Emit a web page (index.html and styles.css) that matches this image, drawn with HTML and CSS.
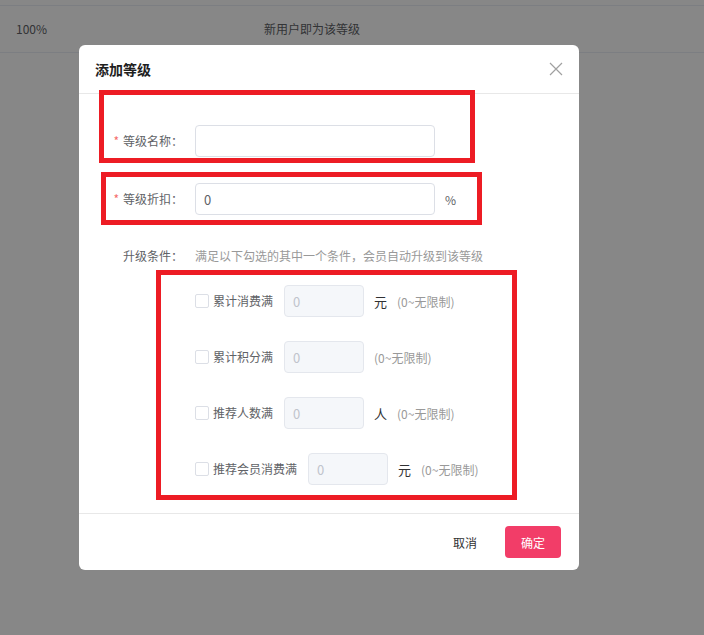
FILE: index.html
```html
<!DOCTYPE html>
<html lang="zh-CN">
<head>
    <meta charset="UTF-8">
    <meta name="viewport" content="width=device-width, initial-scale=1.0">
    <title>会员等级</title>
    <link rel="stylesheet" href="styles.css">
</head>
<body>
    <div class="level-table">
        <div class="table-row">
            <div class="cell">100%</div>
            <div class="cell cell-center">新用户即为该等级</div>
            <div class="cell"></div>
        </div>
    </div>

    <div class="mask"></div>

    <div class="dialog">
        <div class="dialog-header">
            <span class="dialog-title">添加等级</span>
            <button class="dialog-close" type="button" aria-label="关闭">
                <svg width="14" height="14" viewBox="0 0 14 14">
                    <path d="M1 1L13 13M13 1L1 13" stroke="#a0a0a0" stroke-width="1.2" fill="none"/>
                </svg>
            </button>
        </div>

        <form class="dialog-body">
            <div class="form-item">
                <label class="form-label"><span class="required">*</span>等级名称：</label>
                <input class="form-input" type="text">
            </div>
            <div class="form-item form-item-discount">
                <label class="form-label"><span class="required">*</span>等级折扣：</label>
                <input class="form-input" type="text" value="0">
                <span class="unit-percent">%</span>
            </div>
            <div class="form-item form-item-upgrade">
                <label class="form-label">升级条件：</label>
                <span class="form-tip">满足以下勾选的其中一个条件，会员自动升级到该等级</span>
            </div>

            <div class="conditions">
                <div class="condition">
                    <label class="check"><span class="check-box"></span>累计消费满</label>
                    <input class="cond-input" type="text" placeholder="0" disabled>
                    <span class="cond-unit">元</span>
                    <span class="cond-tip">(0~无限制)</span>
                </div>
                <div class="condition">
                    <label class="check"><span class="check-box"></span>累计积分满</label>
                    <input class="cond-input" type="text" placeholder="0" disabled>
                    <span class="cond-tip">(0~无限制)</span>
                </div>
                <div class="condition">
                    <label class="check"><span class="check-box"></span>推荐人数满</label>
                    <input class="cond-input" type="text" placeholder="0" disabled>
                    <span class="cond-unit">人</span>
                    <span class="cond-tip">(0~无限制)</span>
                </div>
                <div class="condition">
                    <label class="check"><span class="check-box"></span>推荐会员消费满</label>
                    <input class="cond-input" type="text" placeholder="0" disabled>
                    <span class="cond-unit">元</span>
                    <span class="cond-tip">(0~无限制)</span>
                </div>
            </div>
        </form>

        <div class="dialog-footer">
            <button class="btn btn-text" type="button">取消</button>
            <button class="btn btn-primary" type="button">确定</button>
        </div>
    </div>

    <!-- annotation frames drawn over the screenshot -->
    <div class="mark mark-name"></div>
    <div class="mark mark-discount"></div>
    <div class="mark mark-conditions"></div>
</body>
</html>
```

FILE: styles.css
```css
* {
    box-sizing: border-box;
}

body {
    font-family: "Noto Sans CJK SC", "Noto Sans", sans-serif;
    font-size: 12px;
    margin: 0;
    padding: 0;
    background-color: #fff;
    color: #606266;
}

.level-table {
    padding-top: 5px;
}

.table-row {
    display: grid;
    grid-template-columns: 200px 224px 1fr;
    height: 48px;
    border-top: 1px solid #ebeef5;
    border-bottom: 1px solid #ebeef5;
    align-items: center;
    color: #606266;
}

.cell {
    padding-left: 16px;
    line-height: 20px;
    padding-bottom: 1px;
}

.cell-center {
    padding-left: 0;
    text-align: center;
}

.mask {
    position: fixed;
    top: 0;
    left: 0;
    right: 0;
    bottom: 0;
    background: rgba(0, 0, 0, 0.47);
}

.dialog {
    position: fixed;
    top: 45px;
    left: 79px;
    width: 500px;
    background: #fff;
    border-radius: 6px;
}

.dialog-header {
    display: flex;
    justify-content: space-between;
    align-items: center;
    height: 49px;
    padding: 0 16px;
    border-bottom: 1px solid #e8e8e8;
}

.dialog-title {
    font-size: 14px;
    font-weight: bold;
    color: #1f1f1f;
    line-height: 20px;
}

.dialog-close {
    border: none;
    background: none;
    padding: 0;
    width: 14px;
    height: 14px;
    margin-right: 0;
    cursor: pointer;
}

.dialog-close svg {
    display: block;
}

.dialog-body {
    padding: 31px 16px 28px;
    margin: 0;
}

.form-item {
    display: flex;
    align-items: center;
    height: 32px;
    margin-bottom: 26px;
}

.form-item-discount {
    margin-bottom: 25px;
}

.form-item-upgrade {
    margin-bottom: 13px;
}

.form-label {
    width: 100px;
    padding-right: 12px;
    text-align: right;
    color: #606266;
    line-height: 20px;
}

.required {
    color: #f56c6c;
    margin-right: 4px;
}

.form-input {
    width: 240px;
    height: 32px;
    padding: 0 8px;
    border: 1px solid #dcdfe6;
    border-radius: 4px;
    font-family: inherit;
    font-size: 13px;
    color: #606266;
    outline: none;
}

.unit-percent {
    margin-left: 10px;
    color: #606266;
}

.form-tip {
    color: #999;
    line-height: 20px;
}

.conditions {
    margin-left: 100px;
}

.condition {
    display: flex;
    align-items: center;
    height: 32px;
    margin-bottom: 24px;
}

.condition:last-child {
    margin-bottom: 0;
}

.check {
    display: flex;
    align-items: center;
    color: #606266;
    line-height: 20px;
    margin-right: 11px;
}

.check-box {
    width: 14px;
    height: 14px;
    border: 1px solid #dcdfe6;
    border-radius: 2px;
    margin-right: 4px;
    background: #fff;
}

.cond-input {
    width: 80px;
    height: 32px;
    padding: 0 8px;
    border: 1px solid #e4e7ed;
    border-radius: 4px;
    background: #f5f7fa;
    font-family: inherit;
    font-size: 13px;
    margin-right: 10px;
}

.cond-input::placeholder {
    color: #c0c4cc;
}

.cond-unit {
    color: #303133;
    font-size: 13px;
    margin-right: 10px;
}

.cond-tip {
    color: #999;
}

.dialog-footer {
    display: flex;
    justify-content: flex-end;
    align-items: center;
    padding: 12px 18px;
    border-top: 1px solid #e8e8e8;
}

.btn {
    height: 32px;
    padding: 0 16px;
    border: none;
    border-radius: 4px;
    font-family: inherit;
    font-size: 12px;
    cursor: pointer;
}

.btn-text {
    background: none;
    color: #303133;
    margin-right: 12px;
}

.btn-primary {
    width: 56px;
    padding: 0;
    background: #f23d68;
    color: #fff;
}

.mark {
    position: absolute;
    border: 5px solid #ed1c24;
}

.mark-name {
    left: 99px;
    top: 90px;
    width: 376px;
    height: 73px;
}

.mark-discount {
    left: 101px;
    top: 172px;
    width: 381px;
    height: 53px;
}

.mark-conditions {
    left: 156px;
    top: 270px;
    width: 361px;
    height: 230px;
}
```
